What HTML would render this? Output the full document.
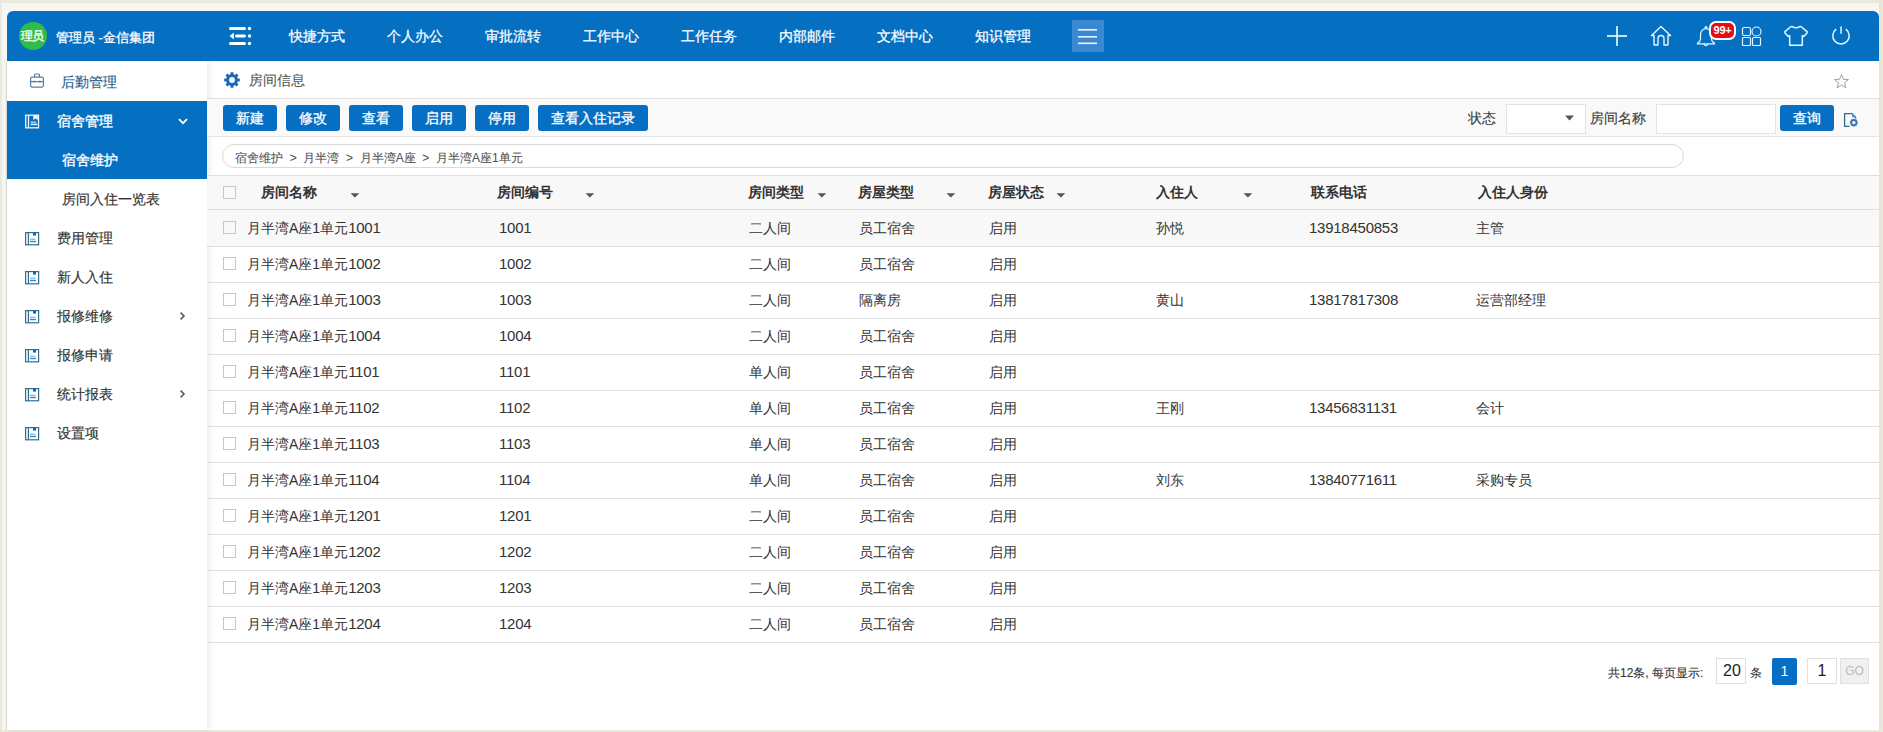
<!DOCTYPE html>
<html><head><meta charset="utf-8"><title>房间信息</title>
<style>
*{box-sizing:border-box;margin:0;padding:0}
html,body{width:1883px;height:732px;overflow:hidden}
body{background:#ebe8dc;font-family:"Liberation Sans",sans-serif;position:relative;color:#333}
.a{position:absolute}
.ht{position:absolute;top:27px;font-size:14px;line-height:18px;color:#fff;white-space:nowrap;-webkit-text-stroke:0.25px #fff}
.st{position:absolute;font-size:14px;line-height:18px;color:#333;white-space:nowrap;-webkit-text-stroke:0.15px #333}
.btn{position:absolute;height:26px;border-radius:3px;background:#076fc3;color:#fff;font-size:14px;line-height:26px;text-align:center;white-space:nowrap;-webkit-text-stroke:0.3px #fff}
.th{position:absolute;font-size:14px;line-height:18px;color:#333;font-weight:bold;white-space:nowrap}
.td{position:absolute;font-size:14px;line-height:18px;color:#333;white-space:nowrap}
.dg{font-size:15px;letter-spacing:-0.25px}
.cb{position:absolute;width:13px;height:13px;border:1px solid #c6c6c6;background:transparent}
.pbox{position:absolute;border:1px solid #e0e0e0;background:#fff;color:#222;text-align:center;line-height:24px}
</style></head><body>
<div class="a" style="left:2px;top:3px;width:1877px;height:727px;background:#f7f6f2"></div>
<div class="a" style="left:1879px;top:3px;width:3px;height:727px;background:#e5e3da"></div>
<div class="a" style="left:7px;top:11px;width:1872px;height:719px;background:#fff"></div>
<div class="a" style="left:6px;top:61px;width:1px;height:669px;background:#dcdcdc"></div>
<div class="a" style="left:7px;top:11px;width:1872px;height:50px;background:#0570c2;border-radius:6px 6px 0 0"></div>
<div class="a" style="left:19px;top:22px;width:28px;height:28px;border-radius:50%;background:#2fbd4a"></div>
<div class="ht" style="left:21px;top:29px;font-size:12px;line-height:15px;letter-spacing:-0.6px;-webkit-text-stroke:0.3px #fff">理员</div>
<div class="ht" style="left:56px;top:29px;font-size:13px;-webkit-text-stroke:0.3px #fff">管理员 -金信集团</div>
<div class="ht" style="left:289px">快捷方式</div>
<div class="ht" style="left:387px">个人办公</div>
<div class="ht" style="left:485px">审批流转</div>
<div class="ht" style="left:583px">工作中心</div>
<div class="ht" style="left:681px">工作任务</div>
<div class="ht" style="left:779px">内部邮件</div>
<div class="ht" style="left:877px">文档中心</div>
<div class="ht" style="left:975px">知识管理</div>
<svg class="a" style="left:228px;top:25px" width="26" height="22" viewBox="0 0 26 22"><g fill="#fff">
<rect x="1" y="2" width="17" height="3" rx="1.5"/><circle cx="21.5" cy="3.5" r="1.7"/>
<rect x="7" y="9.5" width="11" height="3" rx="1.5"/><circle cx="21.5" cy="11" r="1.7"/>
<path d="M1.6 11 L5.8 7.5 L5.8 14.5 Z"/>
<rect x="1" y="17" width="17" height="3" rx="1.5"/><circle cx="21.5" cy="18.5" r="1.7"/></g></svg>
<div class="a" style="left:1072px;top:20px;width:32px;height:32px;background:#3a88d2"></div>
<svg class="a" style="left:1072px;top:20px" width="32" height="32" viewBox="0 0 32 32"><g stroke="#eaf6ff" stroke-width="1.6"><line x1="6" y1="9.8" x2="25" y2="9.8"/><line x1="6" y1="16.8" x2="25" y2="16.8"/><line x1="6" y1="23.3" x2="25" y2="23.3"/></g></svg>
<svg class="a" style="left:1605px;top:24px" width="24" height="24" viewBox="0 0 24 24"><g stroke="#e6f7ff" stroke-width="1.7"><line x1="2" y1="12" x2="22" y2="12"/><line x1="12" y1="2" x2="12" y2="22"/></g></svg>
<svg class="a" style="left:1649px;top:24px" width="24" height="24" viewBox="0 0 24 24"><path d="M2.5 11.5 L12 2.5 L21.5 11.5 L19 11.5 L19 20.5 Q19 21 18.5 21 L15 21 L15 14.5 Q15 11.5 12 11.5 Q9 11.5 9 14.5 L9 21 L5.5 21 Q5 21 5 20.5 L5 11.5 Z" fill="none" stroke="#e6f7ff" stroke-width="1.4" stroke-linejoin="round"/></svg>
<svg class="a" style="left:1695px;top:24px" width="24" height="26" viewBox="0 0 24 26"><g fill="none" stroke="#e6f7ff" stroke-width="1.2"><path d="M11 4.5 Q5.5 5.2 5.5 11.5 L5.5 15.5 Q5.5 17.5 2.5 19 L2.5 19.8 L19.5 19.8 L19.5 19 Q16.5 17.5 16.5 15.5 L16.5 11.5 Q16.5 5.2 11 4.5 Z"/><circle cx="11" cy="3.6" r="0.9"/><path d="M8.8 20.2 Q11 23 13.2 20.2"/></g></svg>
<div class="a" style="left:1709px;top:21px;width:27px;height:19px;border-radius:7px;background:#e30e1a;border:2px solid #fff;color:#fff;font-size:11px;line-height:15px;text-align:center;font-weight:bold;letter-spacing:-0.3px">99+</div>
<svg class="a" style="left:1740px;top:25px" width="24" height="22" viewBox="0 0 24 22"><g fill="none" stroke="#e6f7ff" stroke-width="1.15"><rect x="2.5" y="2.5" width="8" height="8" rx="1.5"/><circle cx="16.5" cy="6.5" r="4.5"/><rect x="2.5" y="12.5" width="8" height="8" rx="1"/><rect x="12.5" y="12.5" width="8" height="8" rx="1"/></g></svg>
<svg class="a" style="left:1783px;top:24px" width="26" height="24" viewBox="0 0 26 24"><path d="M9.2 2.6 Q13 5 16.8 2.6 Q17.8 2.4 18.6 3 L24 7.6 Q24.6 8.2 24 8.9 L21.2 12.1 Q20.6 12.6 20 12.1 L19.3 11.6 L19.3 21.3 L6.7 21.3 L6.7 11.6 L6 12.1 Q5.4 12.6 4.8 12.1 L2 8.9 Q1.4 8.2 2 7.6 L7.4 3 Q8.2 2.4 9.2 2.6 Z" fill="none" stroke="#e6f7ff" stroke-width="1.5" stroke-linejoin="round"/></svg>
<svg class="a" style="left:1829px;top:24px" width="24" height="24" viewBox="0 0 24 24"><g fill="none" stroke="#e6f7ff" stroke-width="1.5"><path d="M7.2 5.2 A8.2 8.2 0 1 0 16.8 5.2"/><line x1="12" y1="2.5" x2="12" y2="9.8"/></g></svg>
<div class="a" style="left:7px;top:61px;width:200px;height:669px;background:#fff;box-shadow:2px 0 6px rgba(0,0,0,0.09)"></div>
<svg class="a" style="left:29px;top:73px" width="16" height="16" viewBox="0 0 16 16"><g fill="none" stroke="#5b7bab" stroke-width="1.2"><rect x="1.6" y="4.1" width="12.8" height="10" rx="1.5"/><path d="M5.6 4 L5.6 1.6 Q5.6 1 6.2 1 L9.8 1 Q10.4 1 10.4 1.6 L10.4 4"/><line x1="1.6" y1="8.6" x2="14.4" y2="8.6"/></g><rect x="4.5" y="7.6" width="1.3" height="2" fill="#5b7bab"/><rect x="10.2" y="7.6" width="1.3" height="2" fill="#5b7bab"/></svg>
<div class="st" style="left:61px;top:73px;color:#1f5f92;-webkit-text-stroke:0.15px #1f5f92">后勤管理</div>
<div class="a" style="left:7px;top:101px;width:200px;height:78px;background:#0570c2"></div>
<svg class="a" style="left:25px;top:114px" width="16" height="16" viewBox="0 0 16 16"><g fill="none" stroke="#eefaff" stroke-width="1.3"><rect x="0.7" y="1.2" width="12.8" height="12.6"/><line x1="3.5" y1="1.2" x2="3.5" y2="13.8"/></g><path d="M8.3 1.2 L12.8 1.2 L12.8 6 L10.5 4.6 L8.3 6 Z" fill="#eefaff"/><rect x="5.6" y="7.4" width="5.5" height="1.5" fill="#9fd0f5"/><rect x="5.6" y="9.6" width="6.5" height="1.6" fill="#dff3ff"/></svg>
<div class="st" style="left:57px;top:112px;color:#fff;-webkit-text-stroke:0.35px #fff">宿舍管理</div>
<svg class="a" style="left:177px;top:116px" width="12" height="10" viewBox="0 0 12 10"><path d="M2 3.2 L6 7.2 L10 3.2" fill="none" stroke="#fff" stroke-width="1.9"/></svg>
<div class="st" style="left:62px;top:151px;color:#fff;-webkit-text-stroke:0.35px #fff">宿舍维护</div>
<div class="st" style="left:62px;top:190px">房间入住一览表</div>
<svg class="a" style="left:25px;top:231px" width="16" height="16" viewBox="0 0 16 16"><g fill="none" stroke="#2f6d8c" stroke-width="1.2"><rect x="0.6" y="1.6" width="13" height="12.2"/><line x1="3.4" y1="1.6" x2="3.4" y2="13.8"/></g><rect x="8" y="1.6" width="3" height="3" fill="#1565c0"/><rect x="5" y="7.6" width="5.5" height="1.4" fill="#8cc0ea"/><rect x="5" y="9.8" width="6" height="1.4" fill="#2f86cc"/></svg>
<div class="st" style="left:57px;top:229px">费用管理</div>
<svg class="a" style="left:25px;top:270px" width="16" height="16" viewBox="0 0 16 16"><g fill="none" stroke="#2f6d8c" stroke-width="1.2"><rect x="0.6" y="1.6" width="13" height="12.2"/><line x1="3.4" y1="1.6" x2="3.4" y2="13.8"/></g><rect x="8" y="1.6" width="3" height="3" fill="#1565c0"/><rect x="5" y="7.6" width="5.5" height="1.4" fill="#8cc0ea"/><rect x="5" y="9.8" width="6" height="1.4" fill="#2f86cc"/></svg>
<div class="st" style="left:57px;top:268px">新人入住</div>
<svg class="a" style="left:25px;top:309px" width="16" height="16" viewBox="0 0 16 16"><g fill="none" stroke="#2f6d8c" stroke-width="1.2"><rect x="0.6" y="1.6" width="13" height="12.2"/><line x1="3.4" y1="1.6" x2="3.4" y2="13.8"/></g><rect x="8" y="1.6" width="3" height="3" fill="#1565c0"/><rect x="5" y="7.6" width="5.5" height="1.4" fill="#8cc0ea"/><rect x="5" y="9.8" width="6" height="1.4" fill="#2f86cc"/></svg>
<div class="st" style="left:57px;top:307px">报修维修</div>
<svg class="a" style="left:176px;top:309px" width="12" height="12" viewBox="0 0 12 12"><path d="M4.6 3.6 L8 7 L4.6 10.4" fill="none" stroke="#555" stroke-width="1.5"/></svg>
<svg class="a" style="left:25px;top:348px" width="16" height="16" viewBox="0 0 16 16"><g fill="none" stroke="#2f6d8c" stroke-width="1.2"><rect x="0.6" y="1.6" width="13" height="12.2"/><line x1="3.4" y1="1.6" x2="3.4" y2="13.8"/></g><rect x="8" y="1.6" width="3" height="3" fill="#1565c0"/><rect x="5" y="7.6" width="5.5" height="1.4" fill="#8cc0ea"/><rect x="5" y="9.8" width="6" height="1.4" fill="#2f86cc"/></svg>
<div class="st" style="left:57px;top:346px">报修申请</div>
<svg class="a" style="left:25px;top:387px" width="16" height="16" viewBox="0 0 16 16"><g fill="none" stroke="#2f6d8c" stroke-width="1.2"><rect x="0.6" y="1.6" width="13" height="12.2"/><line x1="3.4" y1="1.6" x2="3.4" y2="13.8"/></g><rect x="8" y="1.6" width="3" height="3" fill="#1565c0"/><rect x="5" y="7.6" width="5.5" height="1.4" fill="#8cc0ea"/><rect x="5" y="9.8" width="6" height="1.4" fill="#2f86cc"/></svg>
<div class="st" style="left:57px;top:385px">统计报表</div>
<svg class="a" style="left:176px;top:387px" width="12" height="12" viewBox="0 0 12 12"><path d="M4.6 3.6 L8 7 L4.6 10.4" fill="none" stroke="#555" stroke-width="1.5"/></svg>
<svg class="a" style="left:25px;top:426px" width="16" height="16" viewBox="0 0 16 16"><g fill="none" stroke="#2f6d8c" stroke-width="1.2"><rect x="0.6" y="1.6" width="13" height="12.2"/><line x1="3.4" y1="1.6" x2="3.4" y2="13.8"/></g><rect x="8" y="1.6" width="3" height="3" fill="#1565c0"/><rect x="5" y="7.6" width="5.5" height="1.4" fill="#8cc0ea"/><rect x="5" y="9.8" width="6" height="1.4" fill="#2f86cc"/></svg>
<div class="st" style="left:57px;top:424px">设置项</div>
<svg class="a" style="left:223px;top:71px" width="18" height="18" viewBox="0 0 18 18"><path fill="#1a66b6" fill-rule="evenodd" d="M7.47 3.30 L7.49 1.25 L10.51 1.25 L10.53 3.30 L11.95 3.89 L13.42 2.45 L15.55 4.58 L14.11 6.05 L14.70 7.47 L16.75 7.49 L16.75 10.51 L14.70 10.53 L14.11 11.95 L15.55 13.42 L13.42 15.55 L11.95 14.11 L10.53 14.70 L10.51 16.75 L7.49 16.75 L7.47 14.70 L6.05 14.11 L4.58 15.55 L2.45 13.42 L3.89 11.95 L3.30 10.53 L1.25 10.51 L1.25 7.49 L3.30 7.47 L3.89 6.05 L2.45 4.58 L4.58 2.45 L6.05 3.89 Z M9 6.1 A2.9 2.9 0 1 0 9 11.9 A2.9 2.9 0 1 0 9 6.1 Z"/></svg>
<div class="st" style="left:249px;top:71px;color:#555;-webkit-text-stroke:0.1px #555">房间信息</div>
<svg class="a" style="left:1833px;top:73px" width="17" height="17" viewBox="0 0 17 17"><path d="M8.5 1.5 L10.4 6.3 L15.5 6.6 L11.5 9.8 L12.9 14.8 L8.5 12 L4.1 14.8 L5.5 9.8 L1.5 6.6 L6.6 6.3 Z" fill="none" stroke="#a3a3a3" stroke-width="1"/></svg>
<div class="a" style="left:207px;top:98px;width:1672px;height:1px;background:#dfdfdf"></div>
<div class="a" style="left:207px;top:99px;width:1672px;height:37px;background:#f9f9f9"></div>
<div class="a" style="left:207px;top:136px;width:1672px;height:1px;background:#e4e4e4"></div>
<div class="btn" style="left:223px;top:105px;width:54px">新建</div>
<div class="btn" style="left:286px;top:105px;width:54px">修改</div>
<div class="btn" style="left:349px;top:105px;width:54px">查看</div>
<div class="btn" style="left:412px;top:105px;width:54px">启用</div>
<div class="btn" style="left:475px;top:105px;width:54px">停用</div>
<div class="btn" style="left:538px;top:105px;width:110px">查看入住记录</div>
<div class="st" style="left:1468px;top:109px;color:#444">状态</div>
<div class="a" style="left:1506px;top:104px;width:80px;height:30px;background:#fff;border:1px solid #e3e3e3"></div>
<svg class="a" style="left:1564px;top:114px" width="11" height="8" viewBox="0 0 11 8"><path d="M1 1.5 L10 1.5 L5.5 6.5 Z" fill="#555"/></svg>
<div class="st" style="left:1590px;top:109px;color:#444">房间名称</div>
<div class="a" style="left:1656px;top:104px;width:120px;height:30px;background:#fff;border:1px solid #e3e3e3"></div>
<div class="btn" style="left:1780px;top:105px;width:54px">查询</div>
<svg class="a" style="left:1840px;top:110px" width="22" height="20" viewBox="0 0 22 20"><path d="M9.5 16.3 L4.6 16.3 L4.6 3.6 L12 3.6 L15.6 7.2 L15.6 8.6" fill="none" stroke="#2f6c80" stroke-width="1.3"/><path d="M12 3.6 L12 7.2 L15.6 7.2 Z" fill="#4a9ad6"/><g transform="translate(13.8 12.6)"><circle r="2.7" fill="none" stroke="#2f77b8" stroke-width="1.8"/><g stroke="#2f77b8" stroke-width="1.3"><line x1="0" y1="-3.9" x2="0" y2="3.9"/><line x1="-3.9" y1="0" x2="3.9" y2="0"/><line x1="-2.8" y1="-2.8" x2="2.8" y2="2.8"/><line x1="-2.8" y1="2.8" x2="2.8" y2="-2.8"/></g><circle r="1.7" fill="#fafafa"/></g></svg>
<div class="a" style="left:222px;top:144px;width:1462px;height:24px;border:1px solid #dadada;border-radius:12px;background:#fff"></div>
<div class="a" style="left:235px;top:151px;font-size:12px;line-height:14px;color:#555;white-space:pre;-webkit-text-stroke:0.1px #555">宿舍维护  &gt;  月半湾  &gt;  月半湾A座  &gt;  月半湾A座1单元</div>
<div class="a" style="left:207px;top:175px;width:1672px;height:1px;background:#dfdfdf"></div>
<div class="a" style="left:207px;top:176px;width:1672px;height:34px;background:#f8f8f8"></div>
<div class="a" style="left:207px;top:209px;width:1672px;height:1px;background:#dfdfdf"></div>
<div class="cb" style="left:223px;top:186px"></div>
<div class="th" style="left:261px;top:183px">房间名称</div>
<svg class="a" style="left:350px;top:193px" width="10" height="6" viewBox="0 0 10 6"><path d="M0.5 0.3 L9.3 0.3 L4.9 4.6 Z" fill="#555"/></svg>
<div class="th" style="left:497px;top:183px">房间编号</div>
<svg class="a" style="left:585px;top:193px" width="10" height="6" viewBox="0 0 10 6"><path d="M0.5 0.3 L9.3 0.3 L4.9 4.6 Z" fill="#555"/></svg>
<div class="th" style="left:748px;top:183px">房间类型</div>
<svg class="a" style="left:817px;top:193px" width="10" height="6" viewBox="0 0 10 6"><path d="M0.5 0.3 L9.3 0.3 L4.9 4.6 Z" fill="#555"/></svg>
<div class="th" style="left:858px;top:183px">房屋类型</div>
<svg class="a" style="left:946px;top:193px" width="10" height="6" viewBox="0 0 10 6"><path d="M0.5 0.3 L9.3 0.3 L4.9 4.6 Z" fill="#555"/></svg>
<div class="th" style="left:988px;top:183px">房屋状态</div>
<svg class="a" style="left:1056px;top:193px" width="10" height="6" viewBox="0 0 10 6"><path d="M0.5 0.3 L9.3 0.3 L4.9 4.6 Z" fill="#555"/></svg>
<div class="th" style="left:1156px;top:183px">入住人</div>
<svg class="a" style="left:1243px;top:193px" width="10" height="6" viewBox="0 0 10 6"><path d="M0.5 0.3 L9.3 0.3 L4.9 4.6 Z" fill="#555"/></svg>
<div class="th" style="left:1311px;top:183px">联系电话</div>
<div class="th" style="left:1478px;top:183px">入住人身份</div>
<div class="a" style="left:207px;top:210px;width:1672px;height:36px;background:#f8f8f8"></div>
<div class="a" style="left:207px;top:246px;width:1672px;height:1px;background:#dfdfdf"></div>
<div class="cb" style="left:223px;top:221px"></div>
<div class="td" style="left:247px;top:219px">月半湾A座1单元<span class="dg">1001</span></div>
<div class="td dg" style="left:499px;top:219px">1001</div>
<div class="td" style="left:749px;top:219px">二人间</div>
<div class="td" style="left:859px;top:219px">员工宿舍</div>
<div class="td" style="left:989px;top:219px">启用</div>
<div class="td" style="left:1156px;top:219px">孙悦</div>
<div class="td dg" style="left:1309px;top:219px">13918450853</div>
<div class="td" style="left:1476px;top:219px">主管</div>
<div class="a" style="left:207px;top:282px;width:1672px;height:1px;background:#dfdfdf"></div>
<div class="cb" style="left:223px;top:257px"></div>
<div class="td" style="left:247px;top:255px">月半湾A座1单元<span class="dg">1002</span></div>
<div class="td dg" style="left:499px;top:255px">1002</div>
<div class="td" style="left:749px;top:255px">二人间</div>
<div class="td" style="left:859px;top:255px">员工宿舍</div>
<div class="td" style="left:989px;top:255px">启用</div>
<div class="a" style="left:207px;top:318px;width:1672px;height:1px;background:#dfdfdf"></div>
<div class="cb" style="left:223px;top:293px"></div>
<div class="td" style="left:247px;top:291px">月半湾A座1单元<span class="dg">1003</span></div>
<div class="td dg" style="left:499px;top:291px">1003</div>
<div class="td" style="left:749px;top:291px">二人间</div>
<div class="td" style="left:859px;top:291px">隔离房</div>
<div class="td" style="left:989px;top:291px">启用</div>
<div class="td" style="left:1156px;top:291px">黄山</div>
<div class="td dg" style="left:1309px;top:291px">13817817308</div>
<div class="td" style="left:1476px;top:291px">运营部经理</div>
<div class="a" style="left:207px;top:354px;width:1672px;height:1px;background:#dfdfdf"></div>
<div class="cb" style="left:223px;top:329px"></div>
<div class="td" style="left:247px;top:327px">月半湾A座1单元<span class="dg">1004</span></div>
<div class="td dg" style="left:499px;top:327px">1004</div>
<div class="td" style="left:749px;top:327px">二人间</div>
<div class="td" style="left:859px;top:327px">员工宿舍</div>
<div class="td" style="left:989px;top:327px">启用</div>
<div class="a" style="left:207px;top:390px;width:1672px;height:1px;background:#dfdfdf"></div>
<div class="cb" style="left:223px;top:365px"></div>
<div class="td" style="left:247px;top:363px">月半湾A座1单元<span class="dg">1101</span></div>
<div class="td dg" style="left:499px;top:363px">1101</div>
<div class="td" style="left:749px;top:363px">单人间</div>
<div class="td" style="left:859px;top:363px">员工宿舍</div>
<div class="td" style="left:989px;top:363px">启用</div>
<div class="a" style="left:207px;top:426px;width:1672px;height:1px;background:#dfdfdf"></div>
<div class="cb" style="left:223px;top:401px"></div>
<div class="td" style="left:247px;top:399px">月半湾A座1单元<span class="dg">1102</span></div>
<div class="td dg" style="left:499px;top:399px">1102</div>
<div class="td" style="left:749px;top:399px">单人间</div>
<div class="td" style="left:859px;top:399px">员工宿舍</div>
<div class="td" style="left:989px;top:399px">启用</div>
<div class="td" style="left:1156px;top:399px">王刚</div>
<div class="td dg" style="left:1309px;top:399px">13456831131</div>
<div class="td" style="left:1476px;top:399px">会计</div>
<div class="a" style="left:207px;top:462px;width:1672px;height:1px;background:#dfdfdf"></div>
<div class="cb" style="left:223px;top:437px"></div>
<div class="td" style="left:247px;top:435px">月半湾A座1单元<span class="dg">1103</span></div>
<div class="td dg" style="left:499px;top:435px">1103</div>
<div class="td" style="left:749px;top:435px">单人间</div>
<div class="td" style="left:859px;top:435px">员工宿舍</div>
<div class="td" style="left:989px;top:435px">启用</div>
<div class="a" style="left:207px;top:498px;width:1672px;height:1px;background:#dfdfdf"></div>
<div class="cb" style="left:223px;top:473px"></div>
<div class="td" style="left:247px;top:471px">月半湾A座1单元<span class="dg">1104</span></div>
<div class="td dg" style="left:499px;top:471px">1104</div>
<div class="td" style="left:749px;top:471px">单人间</div>
<div class="td" style="left:859px;top:471px">员工宿舍</div>
<div class="td" style="left:989px;top:471px">启用</div>
<div class="td" style="left:1156px;top:471px">刘东</div>
<div class="td dg" style="left:1309px;top:471px">13840771611</div>
<div class="td" style="left:1476px;top:471px">采购专员</div>
<div class="a" style="left:207px;top:534px;width:1672px;height:1px;background:#dfdfdf"></div>
<div class="cb" style="left:223px;top:509px"></div>
<div class="td" style="left:247px;top:507px">月半湾A座1单元<span class="dg">1201</span></div>
<div class="td dg" style="left:499px;top:507px">1201</div>
<div class="td" style="left:749px;top:507px">二人间</div>
<div class="td" style="left:859px;top:507px">员工宿舍</div>
<div class="td" style="left:989px;top:507px">启用</div>
<div class="a" style="left:207px;top:570px;width:1672px;height:1px;background:#dfdfdf"></div>
<div class="cb" style="left:223px;top:545px"></div>
<div class="td" style="left:247px;top:543px">月半湾A座1单元<span class="dg">1202</span></div>
<div class="td dg" style="left:499px;top:543px">1202</div>
<div class="td" style="left:749px;top:543px">二人间</div>
<div class="td" style="left:859px;top:543px">员工宿舍</div>
<div class="td" style="left:989px;top:543px">启用</div>
<div class="a" style="left:207px;top:606px;width:1672px;height:1px;background:#dfdfdf"></div>
<div class="cb" style="left:223px;top:581px"></div>
<div class="td" style="left:247px;top:579px">月半湾A座1单元<span class="dg">1203</span></div>
<div class="td dg" style="left:499px;top:579px">1203</div>
<div class="td" style="left:749px;top:579px">二人间</div>
<div class="td" style="left:859px;top:579px">员工宿舍</div>
<div class="td" style="left:989px;top:579px">启用</div>
<div class="a" style="left:207px;top:642px;width:1672px;height:1px;background:#dfdfdf"></div>
<div class="cb" style="left:223px;top:617px"></div>
<div class="td" style="left:247px;top:615px">月半湾A座1单元<span class="dg">1204</span></div>
<div class="td dg" style="left:499px;top:615px">1204</div>
<div class="td" style="left:749px;top:615px">二人间</div>
<div class="td" style="left:859px;top:615px">员工宿舍</div>
<div class="td" style="left:989px;top:615px">启用</div>
<div class="a" style="left:1608px;top:666px;font-size:12px;line-height:14px;color:#333;white-space:nowrap;-webkit-text-stroke:0.1px #333">共12条, 每页显示:</div>
<div class="pbox" style="left:1716px;top:658px;width:30px;height:26px;font-size:16px;padding-left:2px">20</div>
<div class="a" style="left:1750px;top:666px;font-size:12px;line-height:14px;color:#333">条</div>
<div class="a" style="left:1772px;top:658px;width:25px;height:27px;background:#076fc3;border-radius:2px;color:#fff;font-size:14px;line-height:27px;text-align:center">1</div>
<div class="pbox" style="left:1807px;top:658px;width:30px;height:26px;font-size:16px">1</div>
<div class="pbox" style="left:1840px;top:658px;width:29px;height:26px;font-size:12px;background:#f0f0f0;color:#bbb">GO</div>
</body></html>
